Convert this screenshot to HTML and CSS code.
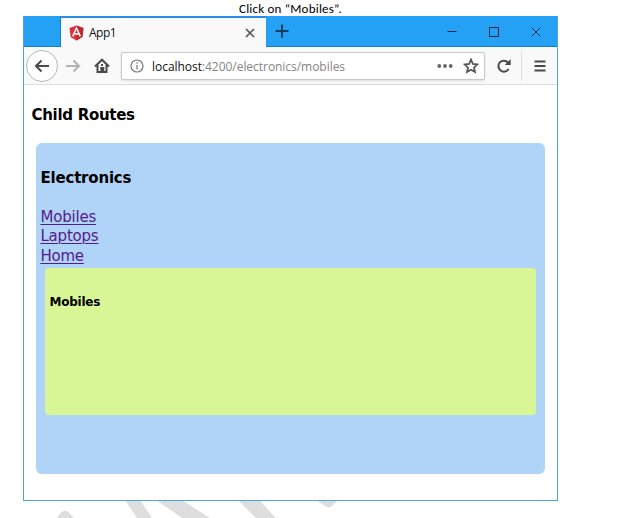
FILE: index.html
```
<!DOCTYPE html>
<html lang="en">
<head>
<meta charset="utf-8">
<title>App1</title>
<link rel="stylesheet" href="styles.css">
</head>
<body>
<svg class="watermark" width="626" height="18" viewBox="0 500 626 18"><path d="M57 518L61 512.500Q65 509 69 512.500L74 518ZM125 500H140L152 518H137ZM156 500H182L210 518H182ZM238 500H259L276 518H256ZM316 500H338L332 506Q329 509 325 506Z"/></svg>
<p class="caption"><span>Click on “Mobiles”.</span></p>
<div class="window">
  <header class="titlebar">
    <div class="tab">
      <svg width="15" height="16" viewBox="0 0 15 16"><path fill="#dd3038" d="M7.500 .5L14.500 3L13.400 12L7.500 15.500L1.600 12L.5 3Z"/><path fill="#bd2932" d="M7.500 .5L14.500 3L13.400 12L7.500 15.500Z"/><path class="letter-mark" d="M3.700 11.400L7.500 3L11.300 11.400M5.200 8.900H9.800"/></svg>
      <span class="tab-title">App1</span>
      <svg class="tab-close" width="10" height="10" viewBox="0 0 10 10"><path d="M1 1L9 9M9 1L1 9"/></svg>
    </div>
    <svg class="plus" width="14" height="14" viewBox="0 0 14 14"><path d="M7 .5V13.500M.5 7H13.500"/></svg>
    <div class="controls">
      <svg width="10" height="10" viewBox="0 0 10 10"><path d="M.5 4.500H9.500"/></svg>
      <svg width="10" height="10" viewBox="0 0 10 10"><path d="M.5 .5H9.500V9.500H.5Z"/></svg>
      <svg width="10" height="10" viewBox="0 0 10 10"><path stroke-width=".9" d="M.5 .5L9.500 9.500M9.500 .5L.5 9.500"/></svg>
    </div>
  </header>
  <nav class="toolbar">
    <div class="back"><svg width="16" height="14" viewBox="0 0 16 14"><path d="M15 7H2M7.500 1.500L2 7L7.500 12.500"/></svg></div>
    <svg class="forward" width="16" height="14" viewBox="0 0 16 14"><path d="M1 7H14M8.500 1.500L14 7L8.500 12.500"/></svg>
    <svg class="home" width="16" height="16" viewBox="0 0 16 16"><path d="M1 8.500L8 1.700L15 8.500M3.500 7V14H12.500V7"/><path d="M7.300 14V10H9.300V14M7 7H9"/></svg>
    <div class="address">
      <svg width="14" height="14" viewBox="0 0 14 14"><circle cx="7" cy="7" r="6"/><path d="M7 6V10.500M7 3.300V4.800"/></svg>
      <span class="url"><b>localhost</b>:4200/electronics/mobiles</span>
      <svg class="dots" width="16" height="6" viewBox="0 0 16 6"><circle cx="2.300" cy="3" r="1.900"/><circle cx="8" cy="3" r="1.900"/><circle cx="13.700" cy="3" r="1.900"/></svg>
      <svg class="star" width="16" height="16" viewBox="0 0 16 16"><path d="M8 1.500L9.900 6L14.300 6.500L11 9.700L12 14L8 11.800L4 14L5 9.700L1.700 6.500L6.100 6Z"/></svg>
    </div>
    <svg class="reload" width="16" height="16" viewBox="0 0 16 16"><path d="M12.600 11A5.500 5.500 0 1 1 12 4.500"/><path class="head" d="M14.700 1V7H8.700Z"/></svg>
    <div class="menu"><svg width="12" height="12" viewBox="0 0 12 12"><path d="M.5 1.500H11.500M.5 6H11.500M.5 10.500H11.500"/></svg></div>
  </nav>
  <main class="page">
    <h1>Child Routes</h1>
    <section class="electronics">
      <h2>Electronics</h2>
      <div class="links"><a href="#">Mobiles</a><a href="#">Laptops</a><a href="#">Home</a></div>
      <section class="mobiles"><h3>Mobiles</h3></section>
    </section>
  </main>
</div>
</body>
</html>
```
FILE: styles.css
```
* { box-sizing: border-box; }
body { margin: 0; height: 518px; overflow: hidden; background: #fff; }
svg { display: block; flex: none; fill: none; stroke: #4a4a4a; stroke-width: 2; }
.watermark { position: absolute; left: 0; top: 500px; fill: #dedede; stroke: none; }
.caption { margin: 0 0 0 239px; height: 16px; font: 13px/18px Carlito, Lato, sans-serif; letter-spacing: .2px; color: #000; white-space: nowrap; }
.window { position: relative; width: 535px; height: 485px; margin-left: 23px; border: 1px solid #4ba6e3; border-top: 0; background: #fff; }
.titlebar { height: 31px; display: flex; align-items: center; background: #24a1f4; border-bottom: 1px solid #1b7fc7; }
.tab { width: 206px; height: 31px; margin: 0 0 -1px 36px; padding: 0 11px 0 8px; display: flex; align-items: center; background: #f9f9fa; border-top: 2px solid #2a8cf0; border-left: 1px solid #1b7fc7; }
.tab svg:first-child { stroke: none; }
.tab .letter-mark { stroke: #fff; stroke-width: 1.5; }
.tab-title { margin-left: 5px; font: 12px/16px "Open Sans", sans-serif; letter-spacing: -.5px; color: #111; }
.tab-close { margin-left: auto; stroke: #555; stroke-width: 1.7; }
.plus { margin-left: 9px; stroke: #123d60; }
.controls { display: flex; gap: 32px; margin-left: auto; margin-right: 16px; padding-top: 2px; }
.controls svg { stroke: #08283e; stroke-width: 1; }
.toolbar { height: 38px; display: flex; align-items: center; background: #f9f9fa; border-bottom: 1px solid #ddd; }
.back { width: 32px; height: 32px; margin-left: 2px; flex: none; display: flex; align-items: center; justify-content: center; background: #fff; border: 1px solid #b8b8b8; border-radius: 50%; }
.forward { margin-left: 7px; stroke: #b2b2b2; }
.home { margin-left: 13px; }
.address { width: 364px; height: 28px; margin-left: 11px; padding: 0 5px 0 8px; display: flex; align-items: center; background: #fff; border: 1px solid #c8c8c8; border-radius: 2px; box-shadow: 0 1px 2px #ddd; }
.address svg { stroke: #777; stroke-width: 1.2; }
.url { margin: 2px 0 0 8px; font: 12px/18px "Open Sans", sans-serif; letter-spacing: -.04px; color: #858585; white-space: nowrap; }
.url b { font-weight: 400; color: #111; }
.address .dots { margin-left: auto; fill: #666; stroke: none; }
.address .star { margin-left: 10px; stroke: #555; stroke-width: 1.8; }
.reload { margin-left: 11px; }
.menu { height: 30px; margin-left: 9px; padding-left: 12px; display: flex; align-items: center; border-left: 1px solid #ddd; }
.reload .head { fill: #4a4a4a; stroke: none; }
.page { font-family: "DejaVu Sans", sans-serif; color: #000; padding: 20px 12px 0; }
h1, h2, h3 { margin: 0; font-size: 15px; line-height: 20px; }
h1 { margin-left: -4.5px; letter-spacing: -.3px; }
.electronics { height: 331px; margin-top: 18px; padding: 25px 9px 0; background: #b0d3f8; border-radius: 6px; }
h2 { margin-left: -4.5px; letter-spacing: -.2px; }
.links { display: flex; flex-direction: column; align-items: flex-start; margin: 20px 0 0 -4.6px; }
a { font-size: 15px; line-height: 19.3px; letter-spacing: -.2px; color: #551a8b; text-underline-offset: 1.5px; text-decoration-thickness: 1px; }
.mobiles { height: 147px; margin-top: 2px; padding: 24px 4.6px; background: #d8f695; border-radius: 4px; }
h3 { font-size: 12px; letter-spacing: -.25px; }
```
